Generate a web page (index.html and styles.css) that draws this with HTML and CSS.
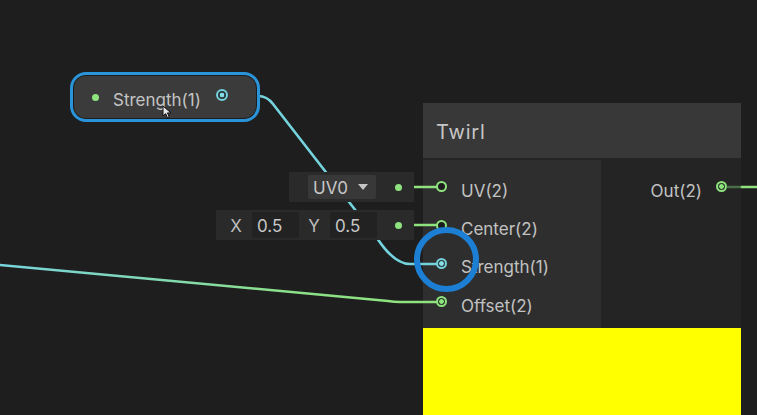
FILE: index.html
```html
<!DOCTYPE html>
<html>
<head>
<meta charset="utf-8">
<link rel="stylesheet" href="styles.css">
</head>
<body>
<div class="canvas">
  <div class="node twirl">
    <div class="node-title">Twirl</div>
    <div class="node-body">
      <div class="inputs">
        <div class="slot"><span class="port green hollow"></span><span class="slot-label">UV(2)</span></div>
        <div class="slot"><span class="port green hollow"></span><span class="slot-label">Center(2)</span></div>
        <div class="slot"><span class="port cyan filled"></span><span class="slot-label">Strength(1)</span></div>
        <div class="slot"><span class="port green filled"></span><span class="slot-label">Offset(2)</span></div>
      </div>
      <div class="outputs">
        <div class="slot out"><span class="slot-label">Out(2)</span><span class="port green filled"></span></div>
      </div>
    </div>
    <div class="preview"></div>
  </div>

  <svg class="wires" width="757" height="415" viewBox="0 0 757 415">
    <defs>
      <linearGradient id="gOff" x1="0" y1="0" x2="400" y2="0" gradientUnits="userSpaceOnUse">
        <stop offset="0" stop-color="#78d4dc"/>
        <stop offset="0.35" stop-color="#80d8b8"/>
        <stop offset="0.7" stop-color="#8ce08a"/>
        <stop offset="1" stop-color="#8ee37f"/>
      </linearGradient>
    </defs>
    <path class="wire cyan-wire" d="M258 96 Q267 96 273 104 L377 238 Q394 264 410 264 L436 264"/>
    <path class="wire" stroke="url(#gOff)" d="M0 265 L388 301 Q394 302 400 302 L436 302"/>
    <path class="wire dim-wire" d="M403 187 L414 187"/>
    <path class="wire green-wire" d="M414 187 L436 187"/>
    <path class="wire dim-wire" d="M403 225 L414 225"/>
    <path class="wire green-wire" d="M414 225 L436 225"/>
    <path class="wire dim-wire" d="M728 187 L742 187"/>
    <path class="wire green-wire" d="M742 187 L757 187"/>
  </svg>

  <div class="inline-input uv">
    <div class="dropdown"><span>UV0</span><span class="caret"></span></div>
    <span class="inline-dot"></span>
  </div>

  <div class="inline-input xy">
    <span class="axis">X</span><span class="field">0.5</span>
    <span class="axis axis-y">Y</span><span class="field">0.5</span>
    <span class="inline-dot"></span>
  </div>

  <div class="prop-node">
    <span class="prop-dot"></span>
    <span class="prop-label">Strength(1)</span>
    <span class="port cyan filled prop-port"></span>
  </div>

  <div class="select-ring"></div>

  <svg class="cursor" width="12" height="14" viewBox="0 0 12 14">
    <path d="M1 1 L1 11 L3.6 8.6 L5.4 12.6 L7.2 11.8 L5.4 7.9 L9 7.9 Z" fill="#e8e8e8" stroke="#111" stroke-width="1"/>
  </svg>
</div>
</body>
</html>
```

FILE: styles.css
```css
html, body {
  margin: 0;
  padding: 0;
  background: #1e1e1e;
}

.canvas {
  position: relative;
  width: 757px;
  height: 415px;
  overflow: hidden;
  background: #1e1e1e;
  font-family: Inter, "Noto Sans", sans-serif;
  color: #c4c4c4;
}

/* ---------- Twirl node ---------- */
.node {
  position: absolute;
  left: 423px;
  top: 103px;
  width: 318px;
  height: 312px;
  display: flex;
  flex-direction: column;
  z-index: 1;
}

.node-title {
  height: 57px;
  box-sizing: border-box;
  background: #383838;
  border-bottom: 2px solid #242424;
  display: flex;
  align-items: center;
  padding-left: 13px;
  padding-top: 2px;
  font-size: 20px;
  letter-spacing: 0.8px;
  color: #c6c6c6;
}

.node-body {
  height: 168px;
  display: grid;
  grid-template-columns: 178px 1fr;
}

.inputs {
  background: #2e2e2e;
  padding-top: 7.5px;
}

.outputs {
  background: #242424;
  padding-top: 7.5px;
}

.slot {
  height: 38.4px;
  display: flex;
  align-items: center;
  font-size: 17px;
}

.slot .port {
  margin-left: 13px;
}

.slot-label {
  margin-left: 14px;
  padding-top: 8px;
  color: #c2c2c2;
}

.slot.out {
  justify-content: flex-end;
  padding-right: 14px;
}

.slot.out .slot-label {
  margin-left: 0;
}

.slot.out .port {
  margin-left: 14px;
}

.preview {
  flex: 1;
  background: #ffff00;
}

/* ---------- ports ---------- */
.port {
  width: 11px;
  height: 11px;
  box-sizing: border-box;
  border-radius: 50%;
  border: 2px solid #8ee37f;
  flex: none;
}

.port.green.hollow {
  background: #1c1c1c;
}

.port.green.filled {
  border-color: #8ee37f;
  background: radial-gradient(circle, #8ee37f 0 2px, #2c3a2a 2.6px);
}

.port.cyan {
  border-color: #74d0da;
}

.port.cyan.filled {
  background: radial-gradient(circle, #86dde6 0 2px, #2b3a3c 2.6px);
}

/* ---------- wires ---------- */
.wires {
  position: absolute;
  left: 0;
  top: 0;
  z-index: 2;
  pointer-events: none;
}

.wire {
  fill: none;
  stroke-width: 2.6;
  stroke-linecap: round;
  stroke-linejoin: round;
}

.cyan-wire {
  stroke: #74d3dc;
}

.green-wire {
  stroke: #8ee37f;
}

.dim-wire {
  stroke: #4a6e45;
}

/* ---------- inline inputs ---------- */
.inline-input {
  position: absolute;
  z-index: 3;
  height: 30px;
  box-sizing: border-box;
  background: #2a2a2a;
  display: flex;
  align-items: center;
  font-size: 17px;
  color: #c8c8c8;
}

.inline-input.uv {
  left: 289px;
  top: 172px;
  width: 125px;
  padding-left: 19px;
}

.inline-input.xy {
  left: 216px;
  top: 210px;
  width: 198px;
  padding-left: 14px;
}

.dropdown {
  width: 68px;
  height: 24px;
  box-sizing: border-box;
  background: #383838;
  border-radius: 2px;
  display: flex;
  align-items: center;
  padding-left: 5px;
  padding-top: 2px;
}

.caret {
  width: 0;
  height: 0;
  margin-left: 10px;
  margin-top: -2px;
  border-left: 5px solid transparent;
  border-right: 5px solid transparent;
  border-top: 6px solid #c4c4c4;
}

.axis {
  width: 12px;
  margin-right: 10px;
  padding-top: 2px;
  text-align: center;
  color: #bcbcbc;
}

.axis-y {
  margin-left: 9px;
}

.field {
  width: 47px;
  height: 26px;
  box-sizing: border-box;
  background: #222222;
  border-radius: 2px;
  padding-left: 5px;
  padding-top: 2px;
  display: flex;
  align-items: center;
}

.inline-dot {
  width: 7px;
  height: 7px;
  border-radius: 50%;
  background: #8ee37f;
  margin-left: auto;
  margin-right: 12px;
}

/* ---------- property node ---------- */
.prop-node {
  position: absolute;
  z-index: 3;
  left: 70px;
  top: 72px;
  width: 190px;
  height: 50px;
  box-sizing: border-box;
  border: 3px solid #2a94da;
  border-radius: 16px;
  background: #3b3b3b;
  box-shadow: inset 0 0 0 1px #1c1c1c;
  display: flex;
  align-items: center;
  padding-left: 19px;
  font-size: 17px;
}

.prop-dot {
  width: 7px;
  height: 7px;
  border-radius: 50%;
  background: #8ee37f;
  flex: none;
}

.prop-label {
  margin-left: 14px;
  padding-top: 5px;
  color: #c4c4c4;
}

.prop-port {
  width: 12px;
  height: 12px;
  margin-left: auto;
  margin-right: 29px;
  margin-top: -4px;
}

/* ---------- selection ring ---------- */
.select-ring {
  position: absolute;
  z-index: 4;
  left: 414px;
  top: 227px;
  width: 65px;
  height: 65px;
  box-sizing: border-box;
  border-radius: 50%;
  border: 6px solid #1c7fd3;
}

.cursor {
  position: absolute;
  z-index: 5;
  left: 162px;
  top: 105px;
}
```
